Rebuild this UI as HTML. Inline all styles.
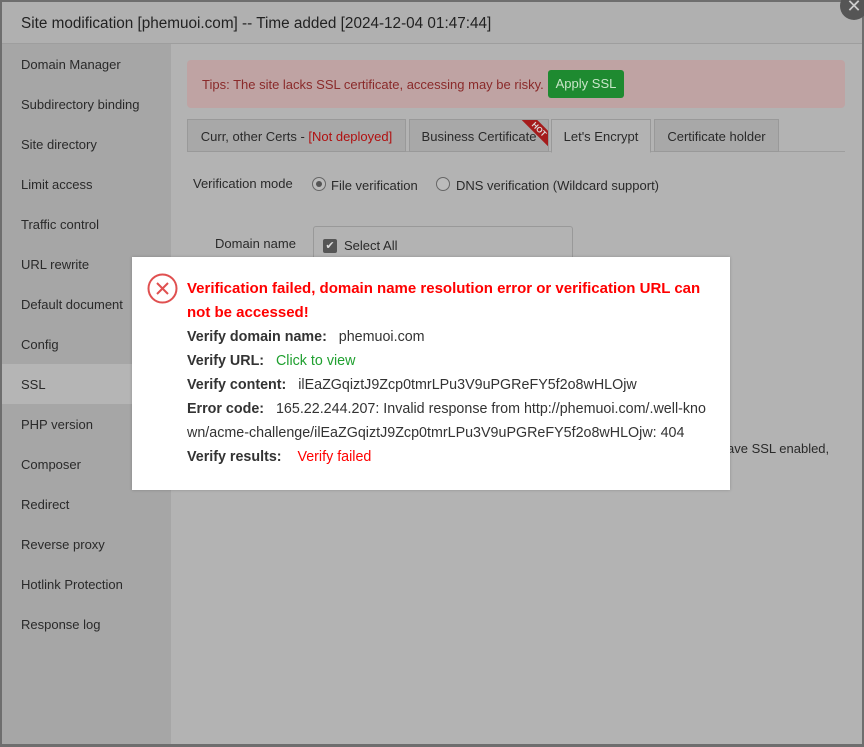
<!DOCTYPE html>
<html><head><meta charset="utf-8"><style>
*{box-sizing:border-box;margin:0;padding:0}
body{width:864px;height:747px;overflow:hidden;background:#6e6e6e;font-family:"Liberation Sans",Arial,sans-serif;position:relative}
.dlg{position:absolute;left:2px;top:2px;width:860px;height:742px;background:#b3b3b3;overflow:hidden}
.hdr{position:absolute;left:0;top:0;width:860px;height:42px;background:#b0b0b0;border-bottom:1px solid #9e9e9e;font-size:15.3px;color:#222;padding:13px 0 0 19px}
.side{position:absolute;left:0;top:42px;width:169px;height:700px;background:#a6a6a6}
.side div{height:40px;line-height:42px;padding-left:19px;font-size:13px;color:#2a2a2a}
.side .act{background:#b5b5b5}
.main{position:absolute;left:169px;top:42px;right:0;bottom:0}
.tips{position:absolute;left:16px;top:16px;width:658px;height:48px;background:#bfa3a3;border-radius:4px;color:#8a2a2a;font-size:13px;padding:17px 0 0 15px}
.btn{position:absolute;left:361px;top:10px;width:76px;height:28px;background:#1e8a30;border-radius:3px;color:#c8e6c8;font-size:13px;text-align:center;line-height:28px}
.tabs{position:absolute;left:16px;top:75px;width:658px;height:33px;border-bottom:1px solid #9e9e9e}
.tab{position:absolute;top:0;height:33px;background:#a8a8a8;border:1px solid #999;font-size:13px;color:#2a2a2a;text-align:center;line-height:33px;overflow:hidden}
.tab.a{background:#b3b3b3;border-bottom:1px solid #b3b3b3;height:34px}
.hot{position:absolute;right:-11px;top:4px;width:40px;height:11px;background:#a51c1c;transform:rotate(45deg);font-size:8px;line-height:11px;color:#ddd;font-weight:bold;text-align:center}
.lbl{position:absolute;font-size:13px;color:#2a2a2a}
.radio{position:absolute;width:14px;height:14px;border:1px solid #666;border-radius:50%;background:#bbb}
.radio.on::after{content:"";position:absolute;left:3px;top:3px;width:6px;height:6px;border-radius:50%;background:#555}
.box{position:absolute;left:142px;top:182px;width:260px;height:40px;border:1px solid #999;border-radius:3px;border-bottom:none}
.chk{position:absolute;left:9px;top:12px;width:14px;height:14px;background:#555;border-radius:2px;color:#ddd;font-size:11px;line-height:14px;text-align:center}
.pop{position:absolute;left:132px;top:257px;width:598px;height:233px;background:#fff;box-shadow:0 0 3px rgba(0,0,0,.2)}
.pop .t{position:absolute;left:55px;top:20px;width:535px;font-size:15px;font-weight:bold;color:#f00;line-height:24px}
.row{position:absolute;left:55px;font-size:14.3px;color:#333;white-space:nowrap}
.row b{color:#333}
</style></head><body>
<div class="dlg">
<div class="hdr">Site modification [phemuoi.com] -- Time added [2024-12-04 01:47:44]</div>
<div class="side">
<div>Domain Manager</div><div>Subdirectory binding</div><div>Site directory</div><div>Limit access</div><div>Traffic control</div><div>URL rewrite</div><div>Default document</div><div>Config</div><div class="act">SSL</div><div>PHP version</div><div>Composer</div><div>Redirect</div><div>Reverse proxy</div><div>Hotlink Protection</div><div>Response log</div>
</div>
<div class="main">
<div class="tips">Tips: The site lacks SSL certificate, accessing may be risky.<div class="btn">Apply SSL</div></div>
<div class="tabs">
<div class="tab" style="left:0;width:219px">Curr, other Certs - <span style="color:#b01010">[Not deployed]</span></div>
<div class="tab" style="left:222px;width:140px">Business Certificate<div class="hot">HOT</div></div>
<div class="tab a" style="left:364px;width:100px">Let's Encrypt</div>
<div class="tab" style="left:467px;width:125px">Certificate holder</div>
</div>
<div class="lbl" style="left:22px;top:132px">Verification mode</div>
<div class="radio on" style="left:141px;top:133px"></div>
<div class="lbl" style="left:160px;top:134px">File verification</div>
<div class="radio" style="left:265px;top:133px"></div>
<div class="lbl" style="left:285px;top:134px">DNS verification (Wildcard support)</div>
<div class="lbl" style="left:44px;top:192px">Domain name</div>
<div class="box"><div class="chk">✔</div><div class="lbl" style="left:30px;top:11px">Select All</div></div>
<div class="lbl" style="left:556px;top:397px">ave SSL enabled,</div>
</div>
</div>
<div style="position:absolute;left:840px;top:-8px;width:28px;height:28px;border-radius:50%;background:#555;color:#ccc;font-size:18px;text-align:center;line-height:28px">✕</div>
<div class="pop">
<svg style="position:absolute;left:15px;top:16px" width="31" height="31" viewBox="0 0 31 31"><circle cx="15.5" cy="15.5" r="14" fill="none" stroke="#e05050" stroke-width="2"/><path d="M10 10L21 21M21 10L10 21" stroke="#e05050" stroke-width="2"/></svg>
<div class="t">Verification failed, domain name resolution error or verification URL can not be accessed!</div>
<div class="row" style="top:72px"><b>Verify domain name:</b>&nbsp;&nbsp; phemuoi.com</div>
<div class="row" style="top:96px"><b>Verify URL:</b>&nbsp;&nbsp; <span style="color:#20a030">Click to view</span></div>
<div class="row" style="top:120px"><b>Verify content:</b>&nbsp;&nbsp; ilEaZGqiztJ9Zcp0tmrLPu3V9uPGReFY5f2o8wHLOjw</div>
<div class="row" style="top:144px"><b>Error code:</b>&nbsp;&nbsp; 165.22.244.207: Invalid response from http://phemuoi.com/.well-kno</div>
<div class="row" style="top:168px">wn/acme-challenge/ilEaZGqiztJ9Zcp0tmrLPu3V9uPGReFY5f2o8wHLOjw: 404</div>
<div class="row" style="top:192px"><b>Verify results:</b>&nbsp;&nbsp;&nbsp; <span style="color:#f00">Verify failed</span></div>
</div>
</body></html>
